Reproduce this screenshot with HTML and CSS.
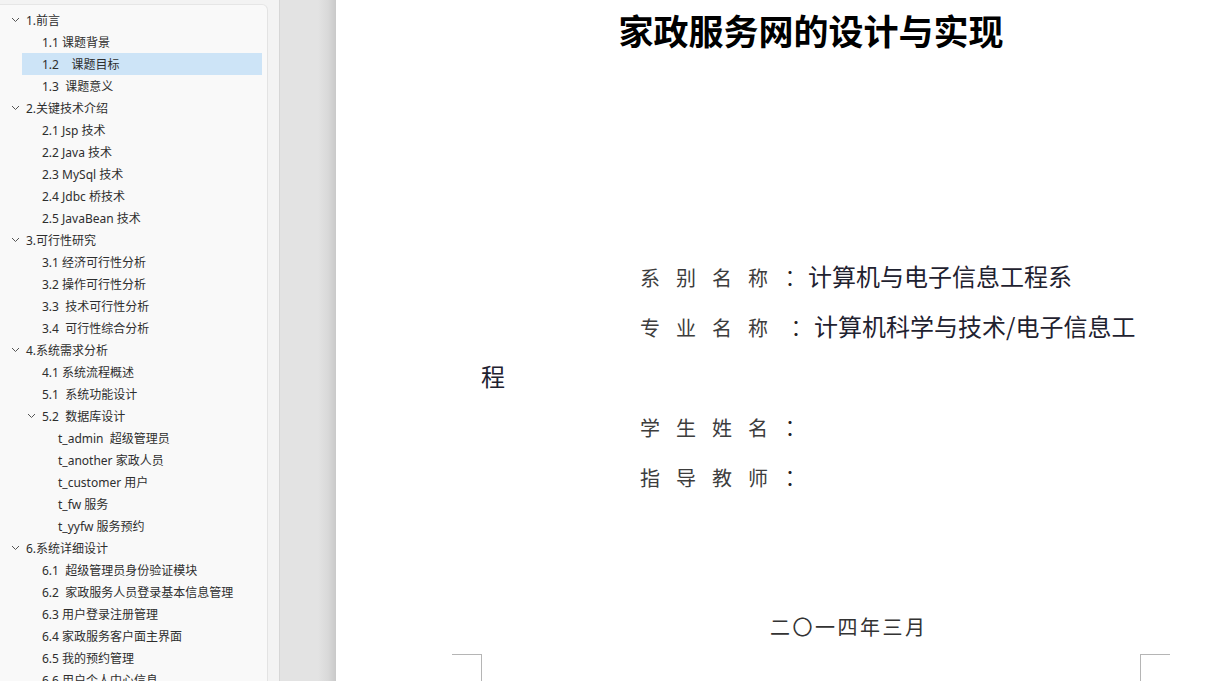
FILE: index.html
```html
<!DOCTYPE html>
<html lang="zh-CN">
<head>
<meta charset="utf-8">
<title>家政服务网的设计与实现</title>
<link rel="stylesheet" href="styles.css">
</head>
<body>
<div class="app">
  <aside class="nav-wrap">
    <nav class="nav">
      <div class="row l1"><svg class="chev" viewBox="0 0 9 6" width="9" height="6"><polyline points="1,1 4.5,4.5 8,1"/></svg><span>1.前言</span></div>
      <div class="row l2"><span>1.1 课题背景</span></div>
      <div class="row l2 sel"><span>1.2    课题目标</span></div>
      <div class="row l2"><span>1.3  课题意义</span></div>
      <div class="row l1"><svg class="chev" viewBox="0 0 9 6" width="9" height="6"><polyline points="1,1 4.5,4.5 8,1"/></svg><span>2.关键技术介绍</span></div>
      <div class="row l2"><span>2.1 Jsp 技术</span></div>
      <div class="row l2"><span>2.2 Java 技术</span></div>
      <div class="row l2"><span>2.3 MySql 技术</span></div>
      <div class="row l2"><span>2.4 Jdbc 桥技术</span></div>
      <div class="row l2"><span>2.5 JavaBean 技术</span></div>
      <div class="row l1"><svg class="chev" viewBox="0 0 9 6" width="9" height="6"><polyline points="1,1 4.5,4.5 8,1"/></svg><span>3.可行性研究</span></div>
      <div class="row l2"><span>3.1 经济可行性分析</span></div>
      <div class="row l2"><span>3.2 操作可行性分析</span></div>
      <div class="row l2"><span>3.3  技术可行性分析</span></div>
      <div class="row l2"><span>3.4  可行性综合分析</span></div>
      <div class="row l1"><svg class="chev" viewBox="0 0 9 6" width="9" height="6"><polyline points="1,1 4.5,4.5 8,1"/></svg><span>4.系统需求分析</span></div>
      <div class="row l2"><span>4.1 系统流程概述</span></div>
      <div class="row l2"><span>5.1  系统功能设计</span></div>
      <div class="row l2c"><svg class="chev" viewBox="0 0 9 6" width="9" height="6"><polyline points="1,1 4.5,4.5 8,1"/></svg><span>5.2  数据库设计</span></div>
      <div class="row l3"><span>t_admin  超级管理员</span></div>
      <div class="row l3"><span>t_another 家政人员</span></div>
      <div class="row l3"><span>t_customer 用户</span></div>
      <div class="row l3"><span>t_fw 服务</span></div>
      <div class="row l3"><span>t_yyfw 服务预约</span></div>
      <div class="row l1"><svg class="chev" viewBox="0 0 9 6" width="9" height="6"><polyline points="1,1 4.5,4.5 8,1"/></svg><span>6.系统详细设计</span></div>
      <div class="row l2"><span>6.1  超级管理员身份验证模块</span></div>
      <div class="row l2"><span>6.2  家政服务人员登录基本信息管理</span></div>
      <div class="row l2"><span>6.3 用户登录注册管理</span></div>
      <div class="row l2"><span>6.4 家政服务客户面主界面</span></div>
      <div class="row l2"><span>6.5 我的预约管理</span></div>
      <div class="row l2"><span>6.6 用户个人中心信息</span></div>
    </nav>
  </aside>
  <div class="gutter"></div>
  <main class="page">
    <div class="content">
      <h1 class="title">家政服务网的设计与实现</h1>
      <div class="fields">
        <p class="field"><span class="label">系别名称</span><span class="colon">：</span><span class="value">计算机与电子信息工程系</span></p>
        <p class="field"><span class="label">专业名称</span><span class="colon shift">：</span><span class="value">计算机科学与技术/电子信息工<br>程</span></p>
        <p class="field"><span class="label">学生姓名</span><span class="colon">：</span></p>
        <p class="field"><span class="label">指导教师</span><span class="colon">：</span></p>
      </div>
      <p class="date">二〇一四年三月</p>
    </div>
    <div class="mark mark-l"></div>
    <div class="mark mark-r"></div>
  </main>
</div>
</body>
</html>
```

FILE: styles.css
```css
html, body {
  margin: 0;
  padding: 0;
  height: 681px;
  overflow: hidden;
}

body {
  font-family: "Noto Sans", "Noto Sans CJK SC", sans-serif;
}

.app {
  display: flex;
  height: 681px;
}

.nav-wrap {
  width: 279px;
  flex: none;
  background: #f3f3f3;
  border-right: 1px solid #d6d6d6;
  overflow: hidden;
}

.nav {
  margin-top: 4px;
  width: 268px;
  height: 700px;
  background: #f9f9f9;
  border-top: 1px solid #e6e6e6;
  border-right: 1px solid #e3e3e3;
  border-top-right-radius: 6px;
  padding-top: 4px;
  box-sizing: border-box;
}

.row {
  height: 22px;
  display: flex;
  align-items: center;
  font-size: 12px;
  color: #2e2e2e;
  white-space: pre;
}

.chev {
  flex: none;
  margin-right: 6px;
}

.chev polyline {
  fill: none;
  stroke: #555;
  stroke-width: 1;
}

.l1 { padding-left: 11px; }
.l2 { padding-left: 42px; }
.l2c { padding-left: 27px; }
.l3 { padding-left: 58px; }

.l2.sel {
  margin-left: 22px;
  width: 240px;
  padding-left: 20px;
  box-sizing: border-box;
  background: #cde4f7;
}

.gutter {
  width: 56px;
  flex: none;
  background: linear-gradient(to right, #e3e3e3 0, #e3e3e3 38px, #d9d9d9 48px, #c9c9c9 56px);
}

.page {
  flex: 1;
  background: #fff;
  position: relative;
  overflow: hidden;
}

.content {
  margin-left: 145px;
  width: 660px;
}

.title {
  margin: 0;
  height: 59px;
  line-height: 59px;
  font-size: 35px;
  font-weight: 700;
  text-align: center;
  color: #000;
  font-family: "Noto Sans CJK SC", sans-serif;
}

.fields {
  margin-top: 192px;
}

.field {
  margin: 0;
  text-indent: 159px;
  font-size: 24px;
  line-height: 50px;
  white-space: nowrap;
  font-family: "Noto Sans CJK SC", sans-serif;
}

.label {
  font-size: 20px;
  line-height: 1;
  letter-spacing: 16px;
  color: #3d3d3d;
}

.colon {
  color: #222;
  font-weight: 300;
}

.colon.shift {
  margin-left: 6px;
}

.value {
  color: #1f2230;
}

.date {
  margin: 101px 0 0 0;
  padding-left: 289px;
  line-height: 50px;
  font-size: 20px;
  letter-spacing: 2.5px;
  color: #333;
  font-family: "Noto Sans CJK SC", sans-serif;
}

.mark {
  position: absolute;
  top: 654px;
  width: 29px;
  height: 40px;
  border-top: 1px solid #b5b5b5;
}

.mark-l {
  left: 116px;
  border-right: 1px solid #b5b5b5;
}

.mark-r {
  left: 804px;
  border-left: 1px solid #b5b5b5;
}
```
